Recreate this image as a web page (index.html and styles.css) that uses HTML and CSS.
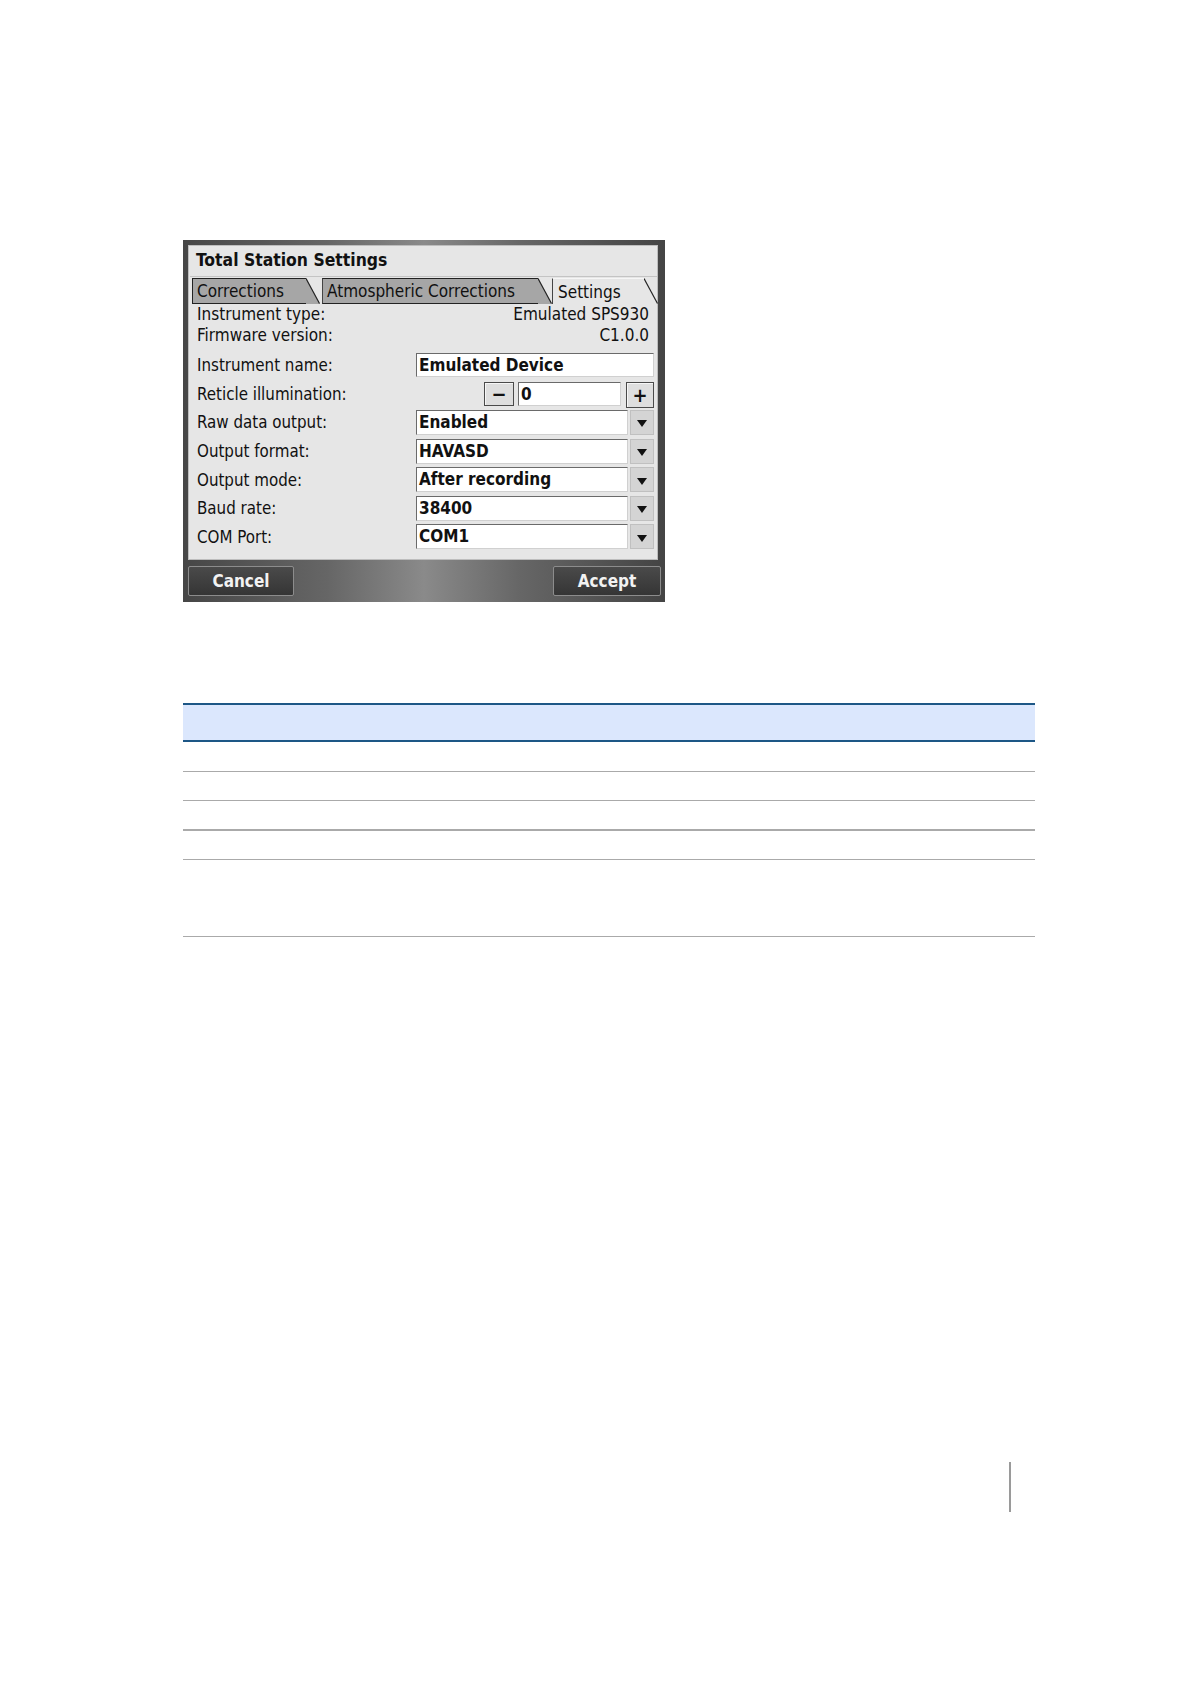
FILE: index.html
```html
<!DOCTYPE html>
<html>
<head>
<meta charset="utf-8">
<link rel="stylesheet" href="styles.css">
</head>
<body>
<div class="page">
  <div class="dialog">
    <div class="panel">
      <div class="title">Total Station Settings</div>
      <div class="tabs">
        <div class="tab tab-corr"><span class="tab-label">Corrections</span><svg class="slash" width="14" height="26" viewBox="0 0 14 26"><polygon points="0,0 14,26 0,26" fill="#a6a6a6"/><line x1="0" y1="0.5" x2="13.5" y2="25.5" stroke="#222" stroke-width="1.2"/></svg></div>
        <div class="tab tab-atmo"><span class="tab-label">Atmospheric Corrections</span><svg class="slash" width="14" height="26" viewBox="0 0 14 26"><polygon points="0,0 14,26 0,26" fill="#a6a6a6"/><line x1="0" y1="0.5" x2="13.5" y2="25.5" stroke="#222" stroke-width="1.2"/></svg></div>
        <div class="tab tab-active"><span class="tab-label">Settings</span><svg class="slash" width="14" height="26" viewBox="0 0 14 26"><line x1="0" y1="0.5" x2="13.5" y2="25.5" stroke="#222" stroke-width="1.2"/></svg></div>
      </div>
      <div class="info-row"><span>Instrument type:</span><span>Emulated SPS930</span></div>
      <div class="info-row"><span>Firmware version:</span><span>C1.0.0</span></div>
      <div class="form">
        <div class="form-row"><span class="label">Instrument name:</span><div class="field full">Emulated Device</div></div>
        <div class="form-row"><span class="label">Reticle illumination:</span>
          <div class="spinner"><div class="spin-btn">&minus;</div><div class="field num">0</div><div class="spin-btn plus">+</div></div>
        </div>
        <div class="form-row"><span class="label">Raw data output:</span><div class="combo"><div class="field">Enabled</div><div class="drop"><span class="tri"></span></div></div></div>
        <div class="form-row"><span class="label">Output format:</span><div class="combo"><div class="field">HAVASD</div><div class="drop"><span class="tri"></span></div></div></div>
        <div class="form-row"><span class="label">Output mode:</span><div class="combo"><div class="field">After recording</div><div class="drop"><span class="tri"></span></div></div></div>
        <div class="form-row"><span class="label">Baud rate:</span><div class="combo"><div class="field">38400</div><div class="drop"><span class="tri"></span></div></div></div>
        <div class="form-row"><span class="label">COM Port:</span><div class="combo"><div class="field">COM1</div><div class="drop"><span class="tri"></span></div></div></div>
      </div>
    </div>
    <div class="buttonbar">
      <div class="btn btn-cancel">Cancel</div>
      <div class="btn btn-accept">Accept</div>
    </div>
  </div>

  <div class="table">
    <div class="thead"></div>
    <div class="trow r1"></div>
    <div class="trow"></div>
    <div class="trow thick"></div>
    <div class="trow"></div>
    <div class="trow tall"></div>
  </div>

  <div class="footer"><div class="page-rule"></div></div>
</div>
</body>
</html>
```

FILE: styles.css
```css
html, body {
  margin: 0;
  padding: 0;
  background: #ffffff;
}

.page {
  padding: 240px 0 0 183px;
  font-family: "DejaVu Sans Condensed", "DejaVu Sans", sans-serif;
  color: #111;
}

/* ---------- Dialog ---------- */
.dialog {
  width: 482px;
  box-sizing: border-box;
  padding: 5px 7px 0 5px;
  background: linear-gradient(to right, #464646 0%, #666 30%, #8a8a8a 50%, #666 70%, #444 100%);
}

.panel {
  background: #e6e6e6;
  height: 315px;
  box-sizing: border-box;
  padding: 0 5px 0 8px;
  border: 1px solid #bdbdbd;
}

.title {
  height: 30px;
  line-height: 28px;
  font-weight: bold;
  font-size: 17.4px;
  border-bottom: 1px solid #c4c4c4;
  margin: 0 -5px 0 -7px;
  padding-left: 6px;
}

.tabs {
  display: flex;
  margin: 1px 0 0 -5px;
  height: 26px;
}

.tab {
  display: flex;
  align-items: stretch;
  height: 26px;
  box-sizing: border-box;
  font-size: 17px;
}

.tab-label {
  display: flex;
  align-items: center;
  background: #a6a6a6;
  border-left: 1px solid #222;
  border-top: 1px solid #222;
  border-bottom: 1px solid #222;
  padding: 0 0 0 4px;
  color: #111;
  white-space: nowrap;
  box-sizing: border-box;
}

.slash {
  display: block;
  flex: none;
}

.tab-corr .tab-label { width: 114px; }
.tab-atmo .tab-label { width: 216px; border-left-color: #444; }
.tab-atmo { margin-left: 2px; }

.tab-active .tab-label {
  background: #e6e6e6;
  border-top: 1px solid #f6f6f6;
  border-left: 1px solid #444;
  border-bottom: none;
  width: 92px;
  padding-left: 5px;
}

.info-row {
  display: flex;
  justify-content: space-between;
  height: 20.5px;
  line-height: 21px;
  font-size: 17px;
  padding-right: 3px;
}

.form {
  margin-top: 6px;
}

.form-row {
  display: grid;
  grid-template-columns: 219px 1fr;
  align-items: center;
  height: 28.6px;
  font-size: 16.8px;
}

.label {
  white-space: nowrap;
}

.field {
  background: #ffffff;
  height: 24px;
  box-sizing: border-box;
  border-top: 1px solid #6a6a6a;
  border-left: 1px solid #6a6a6a;
  border-right: 1px solid #d0d0d0;
  border-bottom: 1px solid #d0d0d0;
  font-weight: bold;
  font-size: 17px;
  line-height: 23px;
  padding-left: 2px;
  white-space: nowrap;
  overflow: hidden;
}

.full {
  width: 238px;
}

.combo {
  display: flex;
  align-items: center;
  width: 238px;
}

.combo .field {
  width: 212px;
  height: 25px;
}

.drop {
  width: 24px;
  height: 25px;
  margin-left: 2px;
  box-sizing: border-box;
  background: #d4d4d4;
  border: 1px solid #c0c0c0;
  display: flex;
  align-items: center;
  justify-content: center;
}

.tri {
  width: 0;
  height: 0;
  border-left: 5px solid transparent;
  border-right: 5px solid transparent;
  border-top: 7px solid #111;
  margin-top: 3px;
}

.spinner {
  display: flex;
  align-items: center;
  justify-content: flex-end;
  width: 238px;
}

.spin-btn {
  width: 30px;
  height: 24px;
  box-sizing: border-box;
  border: 1px solid #4a4a4a;
  background: #dedede;
  box-shadow: inset 1px 1px 0 #f6f6f6;
  display: flex;
  align-items: center;
  justify-content: center;
  font-size: 20px;
  font-weight: bold;
  line-height: 1;
  color: #111;
}

.spin-btn.plus {
  width: 28px;
  height: 26px;
  margin-left: 5px;
  margin-top: 2px;
}

.num {
  width: 103px;
  margin-left: 4px;
}

/* ---------- Button bar ---------- */
.buttonbar {
  height: 42px;
  display: flex;
  align-items: center;
  justify-content: space-between;
  margin: 0 -3px 0 0;
}

.btn {
  height: 30px;
  box-sizing: border-box;
  border: 1px solid #8c8c8c;
  border-radius: 2px;
  background: linear-gradient(to bottom, #4a4a4a, #353535);
  color: #f2f2f2;
  font-weight: bold;
  font-size: 17px;
  display: flex;
  align-items: center;
  justify-content: center;
}

.btn-cancel { width: 106px; }
.btn-accept { width: 108px; }

/* ---------- Table ---------- */
.table {
  width: 852px;
  margin-top: 101px;
}

.thead {
  height: 35px;
  background: #dbe7fd;
  border-top: 2px solid #1d5786;
  border-bottom: 2px solid #1d5786;
}

.trow {
  height: 28px;
  border-bottom: 1px solid #aaaaaa;
}

.trow.r1 {
  height: 29px;
}

.trow.thick {
  height: 28px;
  border-bottom: 2px solid #aaaaaa;
}

.trow.tall {
  height: 76px;
}

/* ---------- Footer ---------- */
.footer {
  margin-top: 525px;
  padding-left: 826px;
}

.page-rule {
  width: 2px;
  height: 50px;
  background: #9a9a9a;
}
```
